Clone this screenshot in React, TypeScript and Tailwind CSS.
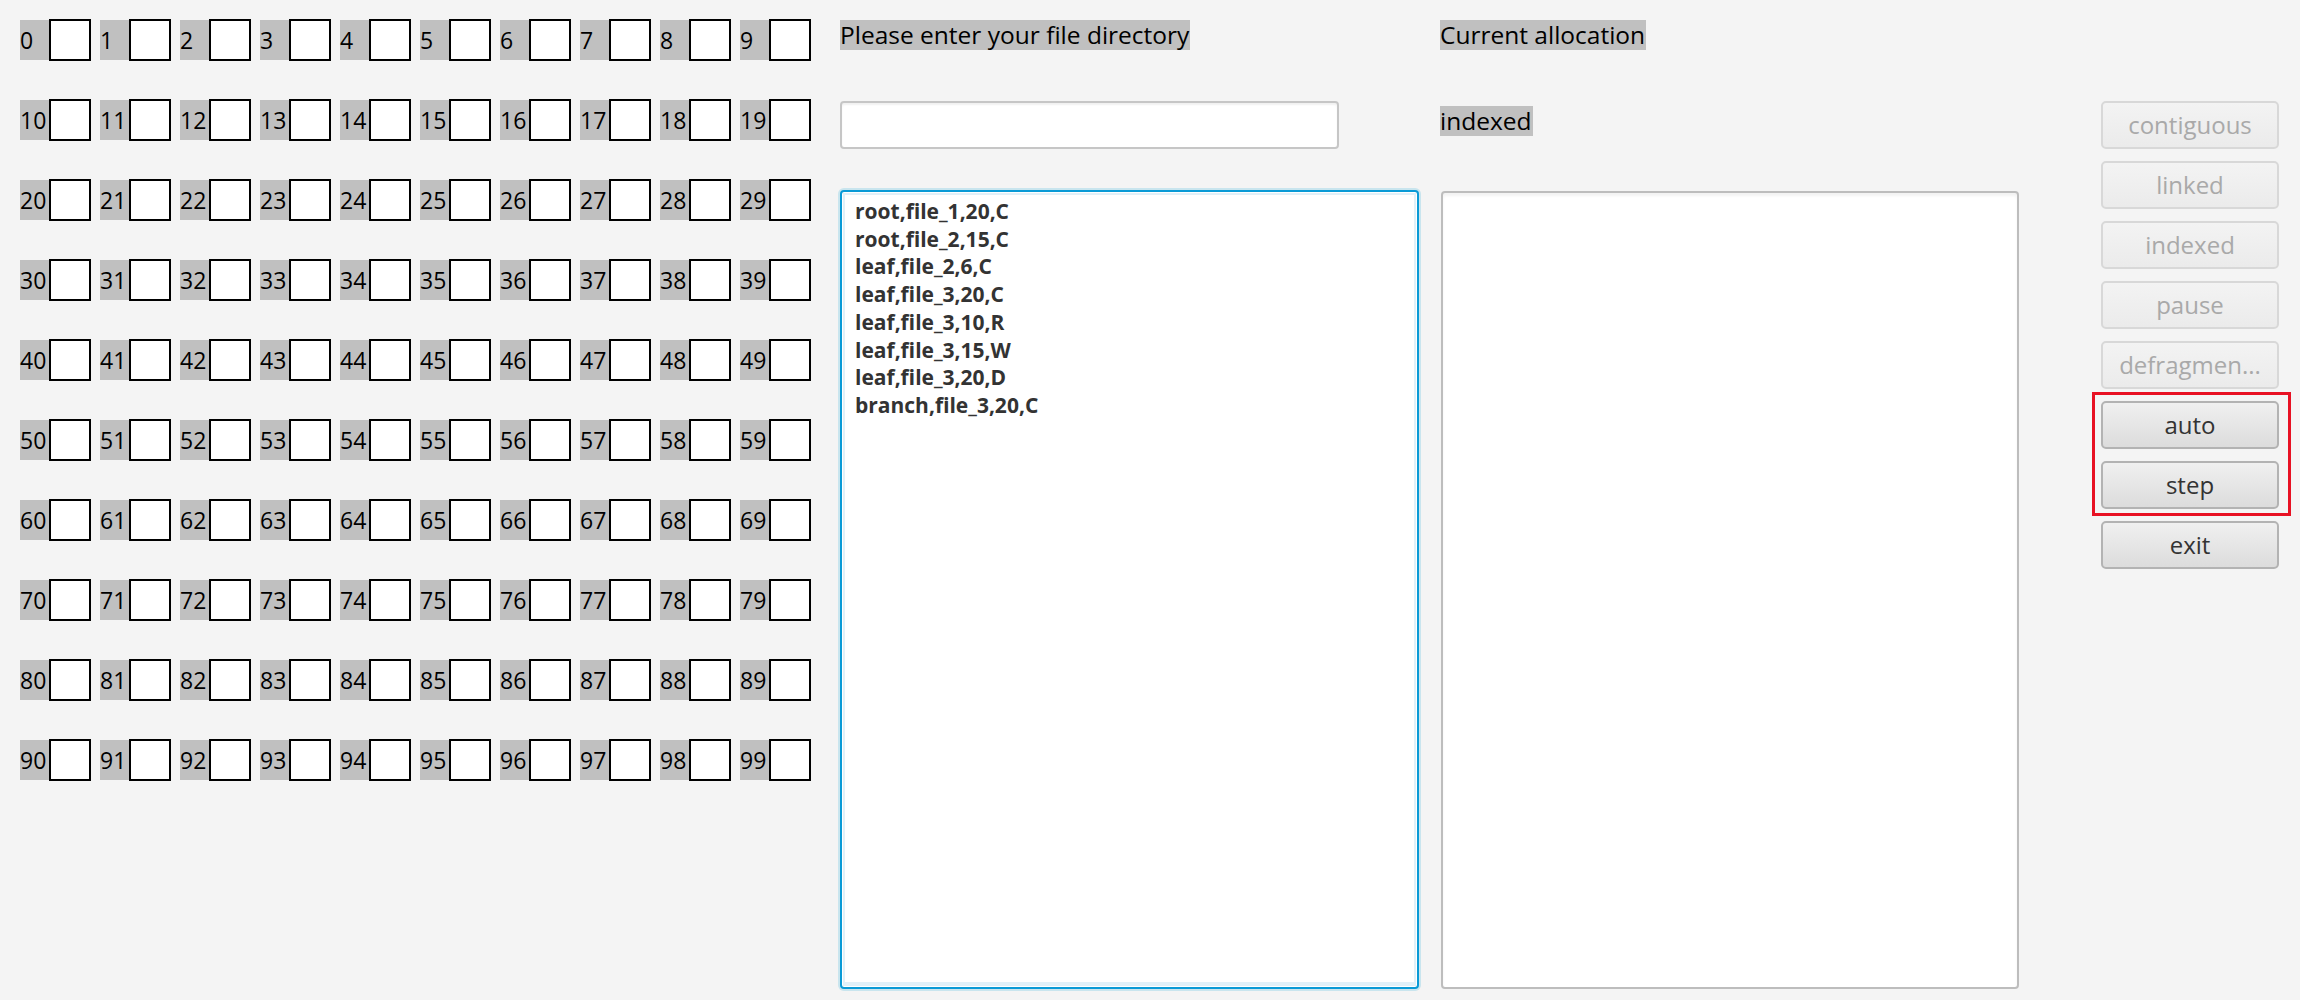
const FONT = { fontFamily: '"Open Sans", "Noto Sans", sans-serif' };

const LINES = [
  "root,file_1,20,C",
  "root,file_2,15,C",
  "leaf,file_2,6,C",
  "leaf,file_3,20,C",
  "leaf,file_3,10,R",
  "leaf,file_3,15,W",
  "leaf,file_3,20,D",
  "branch,file_3,20,C",
];

function Block({ n }: { n: number }) {
  return (
    <div className="flex items-center">
      <div className="w-[29px] h-10 bg-[#c0c0c0] text-[23px] leading-10 text-black">{n}</div>
      <div className="w-[42px] h-[42px] border-2 border-black bg-white" />
    </div>
  );
}

function Label({ children }: { children: string }) {
  return (
    <div className="self-start h-[30px] bg-[#c0c0c0] text-[24.5px] leading-[30px] text-black pr-[1px] whitespace-nowrap">
      {children}
    </div>
  );
}

interface BtnProps {
  label: string;
  enabled?: boolean;
}

function Btn({ label, enabled }: BtnProps) {
  const cls = enabled
    ? "border-[#b3b3b3] text-[#333] bg-gradient-to-b from-[#f0f0f0] to-[#dcdcdc]"
    : "border-[#d8d8d8] text-[#a9a9a9] bg-gradient-to-b from-[#f3f3f3] to-[#ebebeb]";
  return (
    <div
      className={`w-[178px] h-12 rounded-[5px] border-2 flex items-center justify-center text-[24px] ${cls}`}
    >
      {label}
    </div>
  );
}

export default function App() {
  return (
    <div className="w-[2300px] h-[1000px] bg-[#f4f4f4] flex overflow-hidden" style={FONT}>
      {/* disk blocks */}
      <div className="pl-5 pt-[19px] w-[840px]">
        <div className="grid grid-cols-[repeat(10,71px)] gap-x-[9px] gap-y-[38px]">
          {Array.from({ length: 100 }, (_, i) => (
            <Block key={i} n={i} />
          ))}
        </div>
      </div>

      {/* directory input */}
      <div className="w-[600px] pt-5 flex flex-col">
        <Label>Please enter your file directory</Label>
        <div className="mt-[51px] w-[499px] h-[48px] rounded-[4px] border-2 border-[#c6c6c6] bg-white shadow-[inset_0_2px_2px_rgba(0,0,0,0.06)]" />
        <div className="mt-[41px] w-[579px] h-[799px] rounded-[4px] border-2 border-[#0a9ad6] bg-white shadow-[0_0_0_2px_rgba(3,158,211,0.18)] p-px">
          <div className="h-full bg-white border-x-2 border-t-2 border-b-4 border-[#e1f0f8] pl-[10px] pt-[3px] text-[21px] leading-[27.7px] font-bold text-[#333]">
            {LINES.map((l) => (
              <div key={l}>{l}</div>
            ))}
          </div>
        </div>
      </div>

      {/* allocation */}
      <div className="w-[661px] pt-5 flex flex-col">
        <Label>Current allocation</Label>
        <div className="mt-[56px] self-start">
          <Label>indexed</Label>
        </div>
        <div className="mt-[55px] ml-px w-[578px] h-[798px] rounded-[4px] border-2 border-[#bdbdbd] bg-white shadow-[inset_0_3px_3px_rgba(0,0,0,0.05)]" />
      </div>

      {/* controls */}
      <div className="pt-[101px] flex flex-col gap-3">
        <Btn label="contiguous" />
        <Btn label="linked" />
        <Btn label="indexed" />
        <Btn label="pause" />
        <Btn label="defragmen..." />
        <div className="relative flex flex-col gap-3">
          <Btn label="auto" enabled />
          <Btn label="step" enabled />
          <div className="absolute left-[-9px] top-[-9px] w-[199px] h-[124px] border-[3px] border-[#e81123] pointer-events-none" />
        </div>
        <Btn label="exit" enabled />
      </div>
    </div>
  );
}
